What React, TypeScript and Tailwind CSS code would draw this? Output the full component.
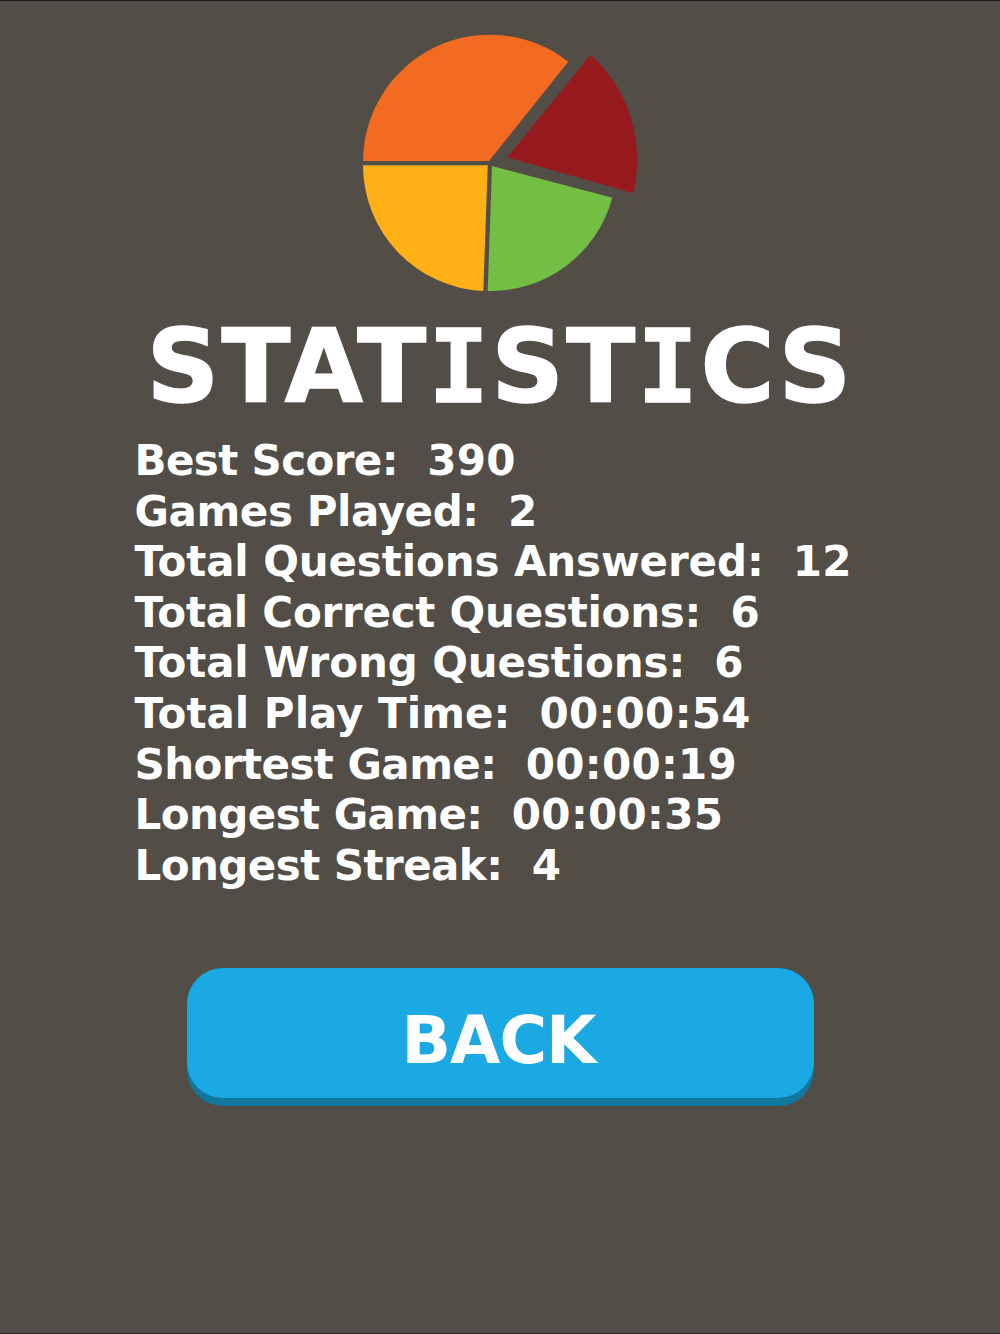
const rows = [
  { label: "Best Score:", value: "390", cls: "tracking-[-0.62px]" },
  { label: "Games Played:", value: "2", cls: "tracking-[-0.42px]" },
  { label: "Total Questions Answered:", value: "12", cls: "tracking-[-0.12px]" },
  { label: "Total Correct Questions:", value: "6", cls: "tracking-[-0.25px]" },
  { label: "Total Wrong Questions:", value: "6", cls: "tracking-[-0.12px]" },
  { label: "Total Play Time:", value: "00:00:54", cls: "tracking-normal" },
  { label: "Shortest Game:", value: "00:00:19", cls: "tracking-[-0.56px]" },
  { label: "Longest Game:", value: "00:00:35", cls: "tracking-[-0.58px]" },
  { label: "Longest Streak:", value: "4", cls: "tracking-[-0.56px]" },
];

function Pie() {
  return (
    <svg width="300" height="285" viewBox="350 20 300 285" className="block">
      <path d="M363 161 A127 127 0 0 1 568.3 61.7 L489 161 Z" fill="#f36a21" />
      <path d="M590.7 54.7 A142 142 0 0 1 633.3 193.3 L507.3 157.3 Z" fill="#971b1e" />
      <path d="M492 166 L612.3 197.7 A126 126 0 0 1 487.7 291 Z" fill="#72bf44" />
      <path d="M363 165.3 L487.7 165.3 L483.3 291 A126 126 0 0 1 363 165.3 Z" fill="#feb015" />
    </svg>
  );
}

function SerifI() {
  return <span className="font-['DejaVu_Sans_Mono',monospace]">I</span>;
}

export default function App() {
  return (
    <div className="w-[1000px] h-[1334px] bg-[#524d47] border-y border-[#1d1b19] flex flex-col items-center font-['DejaVu_Sans',sans-serif] font-bold text-white overflow-hidden">
      <div className="mt-[19px]">
        <Pie />
      </div>
      <h1 className="mt-[2px] text-[101px] leading-[120px] tracking-[2.2px] whitespace-nowrap [-webkit-text-stroke:1.5px_white]">
        STAT<SerifI />ST<SerifI />CS
      </h1>
      <div className="mt-[9px] w-[731px] flex flex-col">
        {rows.map((r) => (
          <div key={r.label} className="text-[42px] leading-[50.6px] whitespace-pre">
            <span className={r.cls}>{r.label}</span>
            <span>{"  "}</span>
            <span className="tracking-[0.3px]">{r.value}</span>
          </div>
        ))}
      </div>
      <button className="mt-[77px] w-[627px] h-[138px] rounded-[36px] bg-[#10779f] flex items-start">
        <span className="w-full h-[130px] pt-[14px] pr-[3px] rounded-[36px] bg-[#1ba9e3] flex items-center justify-center text-[65px] leading-none tracking-[-1px]">
          BACK
        </span>
      </button>
    </div>
  );
}
